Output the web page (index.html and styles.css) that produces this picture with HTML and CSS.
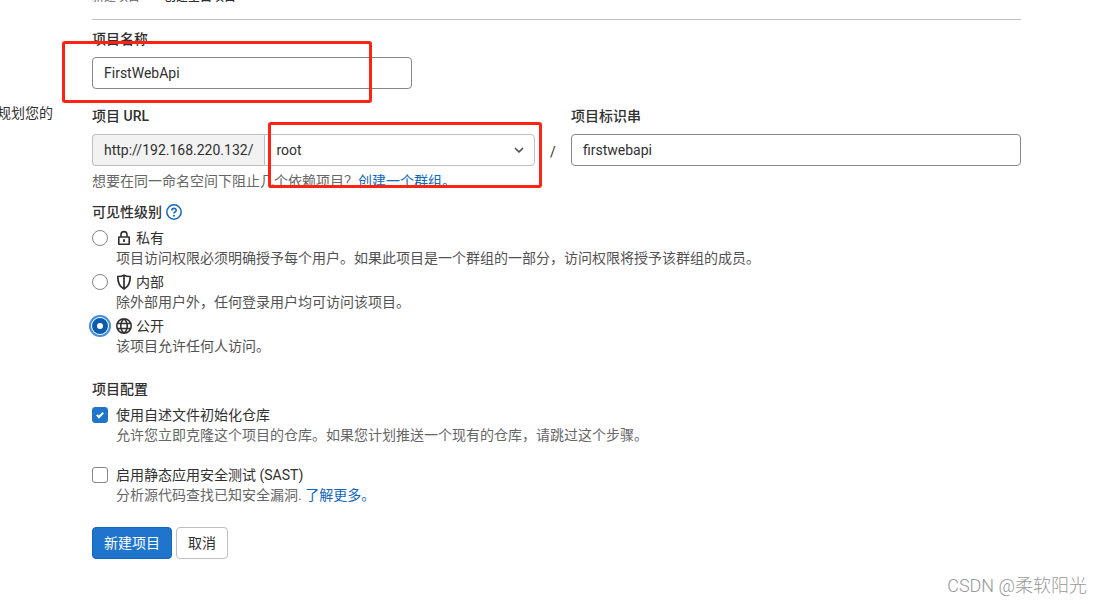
FILE: index.html
```html
<!DOCTYPE html>
<html lang="zh-CN">
<head>
<meta charset="utf-8">
<title>创建空白项目</title>
<link rel="stylesheet" href="styles.css">
</head>
<body>
<div class="page">
  <aside class="intro"><p class="intro-text">规划您的</p></aside>
  <main class="content">
    <nav class="breadcrumb"><a class="crumb" href="#">新建项目</a><span class="crumb-current">创建空白项目</span></nav>
    <form class="form">
      <div class="field name-field">
        <label class="label" for="name">项目名称</label>
        <input class="input name-input" id="name" type="text" value="FirstWebApi">
        <span class="mark mark-name"></span>
      </div>
      <div class="path-row">
        <div class="field">
          <label class="label" for="namespace">项目 URL</label>
          <div class="group">
            <span class="prefix">http://192.168.220.132/</span>
            <div class="select-wrap">
              <select class="select" id="namespace"><option>root</option></select>
              <svg class="chevron" viewBox="0 0 16 16"><path d="M4.500 6.500 8 10l3.500-3.500" fill="none" stroke="#525252" stroke-width="1.700" stroke-linecap="round" stroke-linejoin="round"/></svg>
              <span class="mark mark-namespace"></span>
            </div>
          </div>
        </div>
        <span class="slash">/</span>
        <div class="field">
          <label class="label" for="slug">项目标识串</label>
          <input class="input" id="slug" type="text" value="firstwebapi">
        </div>
      </div>
      <p class="help">想要在同一命名空间下阻止几个依赖项目？<a class="link" href="#">创建一个群组。</a></p>

      <fieldset class="set visibility">
        <legend class="legend">可见性级别
          <a class="help-link" href="#" aria-label="帮助"><svg class="icon" viewBox="0 0 16 16"><circle cx="8" cy="8" r="7.200" fill="none" stroke="#1068bf" stroke-width="1.500"/><path d="M5.900 6.400C5.900 3.700 10.200 3.800 10.200 6.300 10.200 8 8 7.800 8 9.500" fill="none" stroke="#1068bf" stroke-width="1.600"/><circle cx="8" cy="11.700" r="1" fill="#1068bf"/></svg></a>
        </legend>
        <div class="option">
          <input class="radio" type="radio" name="visibility" id="private">
          <div>
            <label class="option-label" for="private"><svg class="icon" viewBox="0 0 16 16"><path d="M2.800 7h10.400v7.200H2.800zM5 7V4.600a3 3 0 0 1 6 0V7" fill="none" stroke="#303030" stroke-width="1.600" stroke-linejoin="round"/><path d="M8 9.200v2.800" stroke="#303030" stroke-width="1.800"/></svg>私有</label>
            <p class="desc">项目访问权限必须明确授予每个用户。如果此项目是一个群组的一部分，访问权限将授予该群组的成员。</p>
          </div>
        </div>
        <div class="option">
          <input class="radio" type="radio" name="visibility" id="internal">
          <div>
            <label class="option-label" for="internal"><svg class="icon" viewBox="0 0 16 16"><path d="M8 1.200C6 2.300 4 2.500 1.800 2.500 1.600 8.500 3.500 12.500 8 15c4.500-2.500 6.400-6.500 6.200-12.500C12 2.500 10 2.300 8 1.200zM8 1.200V15" fill="none" stroke="#303030" stroke-width="1.700" stroke-linejoin="round"/></svg>内部</label>
            <p class="desc">除外部用户外，任何登录用户均可访问该项目。</p>
          </div>
        </div>
        <div class="option">
          <input class="radio" type="radio" name="visibility" id="public" checked>
          <div>
            <label class="option-label" for="public"><svg class="icon" viewBox="0 0 16 16"><path d="M8 .8a7.200 7.200 0 1 0 0 14.400A7.200 7.200 0 0 0 8 .8zM8 .8c-4.300 3.500-4.300 10.900 0 14.400 4.300-3.500 4.300-10.900 0-14.400zM1.500 5.500h13M1.500 10.500h13" fill="none" stroke="#303030" stroke-width="1.600"/></svg>公开</label>
            <p class="desc">该项目允许任何人访问。</p>
          </div>
        </div>
      </fieldset>

      <fieldset class="set config">
        <legend class="legend">项目配置</legend>
        <div class="option">
          <input class="check" type="checkbox" id="readme" checked>
          <div>
            <label class="option-label" for="readme">使用自述文件初始化仓库</label>
            <p class="desc muted">允许您立即克隆这个项目的仓库。如果您计划推送一个现有的仓库，请跳过这个步骤。</p>
          </div>
        </div>
        <div class="option">
          <input class="check" type="checkbox" id="sast">
          <div>
            <label class="option-label" for="sast">启用静态应用安全测试 (SAST)</label>
            <p class="desc muted">分析源代码查找已知安全漏洞. <a class="link" href="#">了解更多。</a></p>
          </div>
        </div>
      </fieldset>
      <div class="actions">
        <button class="btn primary" type="submit">新建项目</button>
        <button class="btn" type="button">取消</button>
      </div>
    </form>
  </main>
  <span class="watermark">CSDN @柔软阳光</span>
</div>
</body>
</html>
```
FILE: styles.css
```css
*, *::before, *::after { box-sizing: border-box; }
body {
  margin: 0;
  background: #fff;
  color: #303030;
  font-family: Roboto, "Noto Sans CJK SC", sans-serif;
  font-size: 14px;
  line-height: 20px;
}
p { margin: 0; }
input, select, button { font: inherit; color: inherit; margin: 0; }
.page {
  position: relative;
  display: flex;
  min-height: 100vh;
  overflow: hidden;
}
.intro {
  flex: 0 0 92px;
  min-width: 0;
  display: flex;
  justify-content: flex-end;
  padding: 103px 39px 0 0;
}
.intro-text { white-space: nowrap; }
.content { flex: 1; min-width: 0; padding-right: 81px; }
.breadcrumb {
  display: flex;
  align-items: flex-end;
  gap: 24px;
  height: 20px;
  padding-bottom: 13px;
  border-bottom: 1px solid #bfbfbf;
  overflow: hidden;
  font-size: 12px;
  line-height: 18px;
}
.crumb { color: #666; text-decoration: none; }
.crumb-current { font-weight: 500; }
.form { padding-top: 9px; }
.field { display: flex; flex-direction: column; gap: 8px; position: relative; }
.label, .legend { font-weight: 500; line-height: 20px; }
.label { align-self: flex-start; }
.input {
  width: 100%;
  height: 32px;
  padding: 0 11px;
  border: 1px solid #868686;
  border-radius: 4px;
  background: #fff;
}
.name-input { max-width: 320px; }
.path-row {
  display: grid;
  grid-template-columns: 443fr 36px 450fr;
  align-items: end;
  margin-top: 17px;
}
.group { display: flex; }
.prefix {
  height: 32px;
  padding: 5px 11px;
  border: 1px solid #bfbfbf;
  border-right: 0;
  border-radius: 4px 0 0 4px;
  background: #f2f2f2;
}
.select-wrap { position: relative; flex: 1; }
.select {
  display: block;
  width: 100%;
  height: 32px;
  padding: 0 11px;
  appearance: none;
  border: 1px solid #bfbfbf;
  border-radius: 0 4px 4px 0;
  background: #fff;
}
.chevron { position: absolute; right: 8px; top: 8px; width: 16px; height: 16px; pointer-events: none; }
.slash { line-height: 20px; padding-bottom: 4px; text-align: center; }
.mark {
  position: absolute;
  z-index: 2;
  border: 3px solid #ff2314;
  border-radius: 3px;
  pointer-events: none;
}
.mark-name { left: -30px; top: 12px; width: 310px; height: 62px; }
.mark-namespace { left: 4px; right: -7px; top: -12px; height: 66px; }
.help { margin-top: 5px; color: #666; }
.link { color: #1068bf; text-decoration: none; }
.set { border: 0; margin: 0; padding: 0; min-width: 0; }
.legend { display: flex; align-items: center; gap: 4px; padding: 0; }
.help-link { display: flex; }
.icon { width: 16px; height: 16px; flex: none; }
.visibility { margin-top: 11px; }
.visibility .legend { margin-bottom: 6px; }
.option { display: flex; gap: 8px; }
.visibility .option { margin-bottom: 4px; }
.config { margin-top: 19px; }
.config .legend { margin-bottom: 6px; }
.config .option + .option { margin-top: 20px; }
.option-label { display: flex; align-items: center; gap: 4px; }
.desc { color: #525252; }
.muted { color: #666; }
.radio, .check {
  appearance: none;
  flex: none;
  width: 16px;
  height: 16px;
  margin-top: 2px;
  border: 1px solid #868686;
  background: #fff;
}
.radio { border-radius: 50%; }
.radio:checked {
  border: 5px solid #0b5cad;
  box-shadow: 0 0 0 1px #fff, 0 0 0 3px #428fdc;
}
.check { border-radius: 3px; display: flex; justify-content: center; padding-top: 3px; }
.check:checked { background: #1f75cb; border-color: #1f75cb; }
.check:checked::before {
  content: "";
  width: 4px;
  height: 7px;
  border: solid #fff;
  border-width: 0 2px 2px 0;
  transform: rotate(45deg);
}
.actions { display: flex; gap: 4px; margin-top: 22px; }
.btn {
  height: 32px;
  padding: 0 11px;
  border: 1px solid #bfbfbf;
  border-radius: 4px;
  background: #fff;
}
.primary { background: #1f75cb; border-color: #1068bf; color: #fff; }
.watermark {
  position: absolute;
  right: 15px;
  bottom: 6px;
  color: #999;
  font-weight: 300;
  font-size: 18px;
  line-height: 24px;
}
```
